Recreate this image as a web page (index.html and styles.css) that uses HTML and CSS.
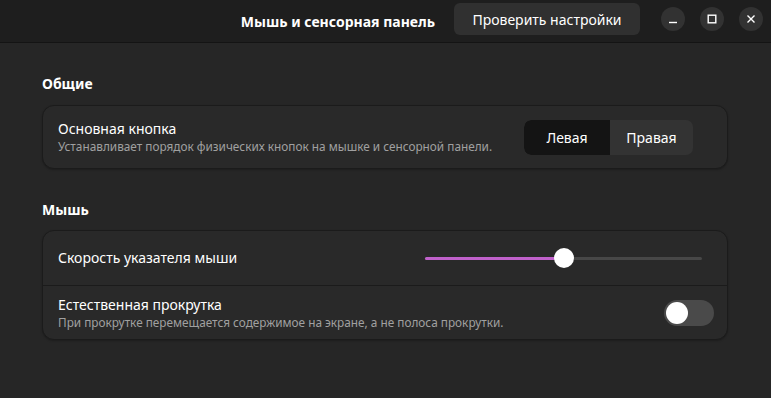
FILE: index.html
```html
<!DOCTYPE html>
<html lang="ru">
<head>
<meta charset="utf-8">
<link rel="stylesheet" href="styles.css">
</head>
<body>
<div class="window">
  <header class="headerbar">
    <div class="hb-spacer"></div>
    <div class="hb-title">Мышь и сенсорная панель</div>
    <button class="hb-button">Проверить настройки</button>
    <div class="wm-controls">
      <span class="wm-btn"><svg width="12" height="12" viewBox="0 0 12 12"><path d="M2 9.5h8" stroke="#fff" stroke-width="1.4"/></svg></span>
      <span class="wm-btn"><svg width="12" height="12" viewBox="0 0 12 12"><rect x="2.2" y="2.2" width="7.6" height="7.6" fill="none" stroke="#fff" stroke-width="1.4"/></svg></span>
      <span class="wm-btn"><svg width="12" height="12" viewBox="0 0 12 12"><path d="M2.5 2.5l7 7M9.5 2.5l-7 7" stroke="#fff" stroke-width="1.4"/></svg></span>
    </div>
  </header>
  <main class="content">
    <h2 class="section-title">Общие</h2>
    <div class="card">
      <div class="row row-primary">
        <div class="row-text">
          <div class="row-title">Основная кнопка</div>
          <div class="row-sub">Устанавливает порядок физических кнопок на мышке и сенсорной панели.</div>
        </div>
        <div class="toggle-group">
          <span class="tg-item active">Левая</span>
          <span class="tg-item">Правая</span>
        </div>
      </div>
    </div>
    <h2 class="section-title second">Мышь</h2>
    <div class="card">
      <div class="row row-slider">
        <div class="row-title">Скорость указателя мыши</div>
        <div class="slider">
          <div class="slider-track"><div class="slider-fill" style="width:50%"></div></div>
          <div class="slider-knob" style="left:50%"></div>
        </div>
      </div>
      <div class="row row-switch">
        <div class="row-text">
          <div class="row-title">Естественная прокрутка</div>
          <div class="row-sub">При прокрутке перемещается содержимое на экране, а не полоса прокрутки.</div>
        </div>
        <div class="switch"><div class="switch-knob"></div></div>
      </div>
    </div>
  </main>
</div>
</body>
</html>
```
FILE: styles.css
```css
* { box-sizing: border-box; }
html, body { margin: 0; padding: 0; }
body {
  width: 771px;
  height: 398px;
  overflow: hidden;
  background: #262626;
  font-family: "Noto Sans", "Open Sans", sans-serif;
  color: #ffffff;
}
.window { display: flex; flex-direction: column; height: 100%; }
.headerbar {
  height: 43px;
  background: #1e1e1e;
  border-bottom: 1px solid #141414;
  display: flex;
  align-items: center;
  padding: 0 8px 0 0;
}
.hb-spacer { flex: 1; }
.hb-title {
  font-weight: 700;
  font-size: 14px;
  margin-right: 19px;
  letter-spacing: 0;
}
.hb-button {
  height: 32px;
  width: 186px;
  margin-top: -4px;
  background: #303030;
  border: none;
  border-radius: 6px;
  color: #fff;
  font-family: inherit;
  font-size: 14px;
  padding: 0;
}
.wm-controls { display: flex; gap: 15px; margin-left: 21px; margin-top: -4px; }
.wm-btn {
  width: 24px; height: 24px;
  border-radius: 50%;
  background: #323232;
  display: flex; align-items: center; justify-content: center;
}
.content { padding: 0 43px 0 42px; }
.section-title {
  margin: 32px 0 12px;
  font-size: 14px;
  font-weight: 700;
  line-height: 18px;
}
.section-title.second { margin-top: 32px; margin-bottom: 11px; }
.card {
  background: #292929;
  border: 1px solid #1b1b1b;
  border-radius: 12px;
  box-shadow: 0 1px 2px rgba(0,0,0,0.25);
}
.row {
  display: flex;
  align-items: center;
  padding: 0 15px;
}
.row + .row { border-top: 1px solid #1b1b1b; }
.row-primary { height: 62px; padding-right: 34px; }
.row-text { flex: 1; display: flex; flex-direction: column; }
.row-title { font-size: 14px; line-height: 18px; }
.row-sub { font-size: 11.8px; line-height: 15px; color: #a0a0a0; margin-top: 1px; }
.toggle-group {
  display: flex;
  background: #333333;
  border-radius: 7px;
  height: 35px;
  overflow: hidden;
}
.tg-item {
  display: flex; align-items: center; justify-content: center;
  font-size: 14px;
  width: 83px;
}
.tg-item.active { background: #141414; width: 86px; border-radius: 7px 0 0 7px; }
.row-slider { height: 54px; justify-content: space-between; padding-right: 25px; }
.slider { position: relative; width: 277px; height: 20px; }
.slider-track {
  position: absolute; left: 0; right: 0; top: 9px; height: 3px;
  background: #474747; border-radius: 2px;
}
.slider-fill { height: 100%; background: #c061cb; border-radius: 2px; }
.slider-knob {
  position: absolute; top: 0; width: 20px; height: 20px; margin-left: -10px;
  background: #fff; border-radius: 50%;
}
.row-switch { height: 54px; padding-right: 13px; }
.switch {
  width: 50px; height: 26px; border-radius: 13px;
  background: #4a4a4a; position: relative;
}
.switch-knob {
  position: absolute; left: 2px; top: 2px; width: 22px; height: 22px;
  background: #fff; border-radius: 50%;
}
```
